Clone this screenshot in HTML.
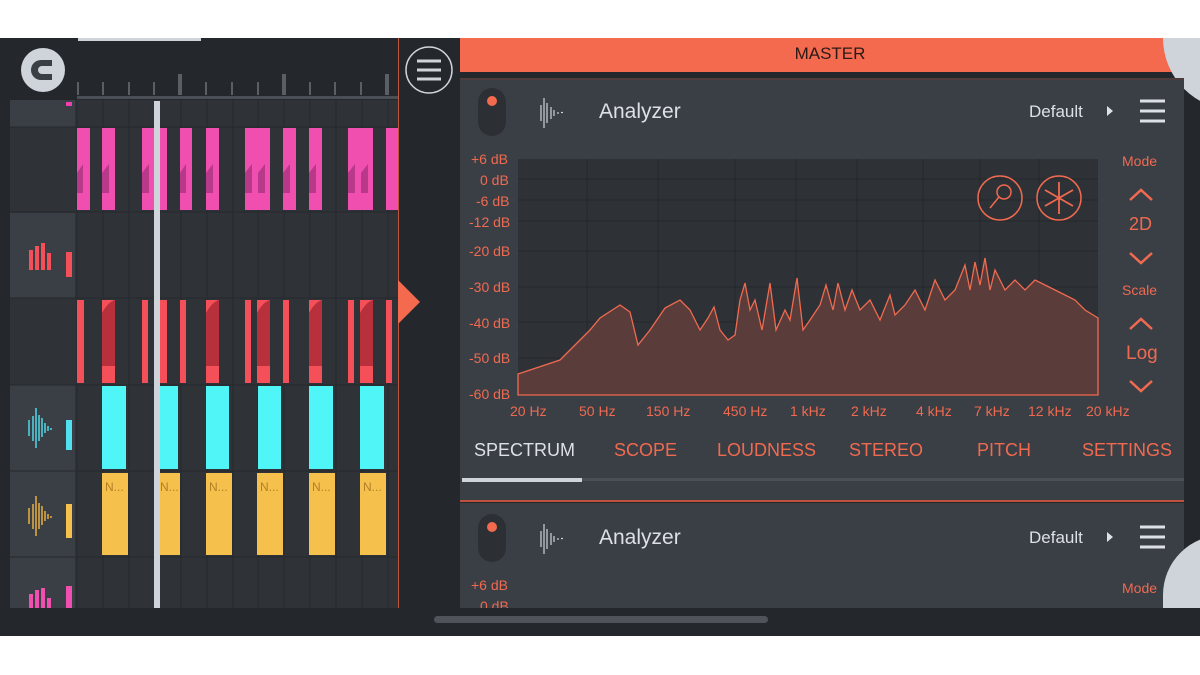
<!DOCTYPE html><html><head><meta charset="utf-8"><style>
*{margin:0;padding:0;box-sizing:border-box}
body{width:1200px;height:675px;background:#fff;position:relative;overflow:hidden;font-family:"Liberation Sans",sans-serif}
.a{position:absolute}
.lab{position:absolute;color:#f06a50;font-size:14px}
</style></head><body>
<div class="a" style="left:0;top:38px;width:1200px;height:598px;background:#24272b"></div>
<div class="a" style="left:78px;top:38px;width:123px;height:3px;background:#cfd3da"></div>
<div class="a" style="left:10px;top:100px;width:388px;height:508px;background:#2f3338"></div>
<div class="a" style="left:10px;top:100px;width:65px;height:508px;background:#3a3e45"></div>
<div class="a" style="left:10px;top:127px;width:65px;height:86px;background:#2f3338"></div>
<div class="a" style="left:10px;top:298px;width:65px;height:87px;background:#2f3338"></div>
<svg class="a" style="left:0;top:38px" width="460" height="598">
<g stroke="#26292d" stroke-width="1">
<line x1="10" y1="89" x2="398" y2="89"/><line x1="10" y1="174" x2="398" y2="174"/><line x1="10" y1="260" x2="398" y2="260"/><line x1="10" y1="347" x2="398" y2="347"/><line x1="10" y1="433" x2="398" y2="433"/><line x1="10" y1="519" x2="398" y2="519"/>
<line x1="77" y1="62" x2="77" y2="570"/><line x1="103" y1="62" x2="103" y2="570"/><line x1="129" y1="62" x2="129" y2="570"/><line x1="181" y1="62" x2="181" y2="570"/><line x1="207" y1="62" x2="207" y2="570"/><line x1="233" y1="62" x2="233" y2="570"/><line x1="258" y1="62" x2="258" y2="570"/><line x1="284" y1="62" x2="284" y2="570"/><line x1="310" y1="62" x2="310" y2="570"/><line x1="336" y1="62" x2="336" y2="570"/><line x1="362" y1="62" x2="362" y2="570"/><line x1="388" y1="62" x2="388" y2="570"/>
</g>
<rect x="77" y="58" width="321" height="3" fill="#4a4e55"/>
<g fill="#5a5e65"><rect x="77" y="44" width="2" height="13"/><rect x="102" y="44" width="2" height="13"/><rect x="128" y="44" width="2" height="13"/><rect x="153" y="44" width="2" height="13"/><rect x="178" y="36" width="4" height="21"/><rect x="205" y="44" width="2" height="13"/><rect x="231" y="44" width="2" height="13"/><rect x="257" y="44" width="2" height="13"/><rect x="282" y="36" width="4" height="21"/><rect x="309" y="44" width="2" height="13"/><rect x="334" y="44" width="2" height="13"/><rect x="360" y="44" width="2" height="13"/><rect x="385" y="36" width="4" height="21"/></g>
<circle cx="43" cy="32" r="22" fill="#cfd3da"/>
<path d="M52 22 H41 A10 10 0 0 0 41 42 H52 V36 H42 A4 4 0 0 1 42 28 H52 Z" fill="#3a3e45"/>
<rect x="48" y="28" width="3" height="8" fill="#cfd3da"/>
<rect x="66" y="64" width="6" height="4" fill="#f040b0"/>
<line x1="398.5" y1="0" x2="398.5" y2="570" stroke="#c0553e"/>
<circle cx="429" cy="32" r="23" fill="none" stroke="#cfd3da" stroke-width="1.5"/>
<g stroke="#cfd3da" stroke-width="3"><line x1="417" y1="23" x2="441" y2="23"/><line x1="417" y1="32" x2="441" y2="32"/><line x1="417" y1="41" x2="441" y2="41"/></g>
<path d="M398 242 L420 264 L398 286Z" fill="#f46a4e"/>
<g fill="#f04fb0"><rect x="77" y="90" width="13" height="82"/><rect x="102" y="90" width="13" height="82"/><rect x="142" y="90" width="25" height="82"/><rect x="180" y="90" width="12" height="82"/><rect x="206" y="90" width="13" height="82"/><rect x="245" y="90" width="25" height="82"/><rect x="283" y="90" width="13" height="82"/><rect x="309" y="90" width="13" height="82"/><rect x="348" y="90" width="25" height="82"/><rect x="386" y="90" width="12" height="82"/></g>
<g fill="#b8388a"><path d="M77 155 V135 L83 126 V155Z"/><path d="M102 155 V135 L109 126 V155Z"/><path d="M142 155 V135 L149 126 V155Z"/><path d="M180 155 V135 L186 126 V155Z"/><path d="M206 155 V135 L213 126 V155Z"/><path d="M245 155 V135 L252 126 V155Z"/><path d="M258 155 V135 L265 126 V155Z"/><path d="M283 155 V135 L290 126 V155Z"/><path d="M309 155 V135 L316 126 V155Z"/><path d="M348 155 V135 L355 126 V155Z"/><path d="M361 155 V135 L368 126 V155Z"/></g>
<g fill="#f5505a"><rect x="77" y="262" width="7" height="83"/><rect x="102" y="262" width="13" height="83"/><rect x="142" y="262" width="6" height="83"/><rect x="158" y="262" width="9" height="83"/><rect x="180" y="262" width="6" height="83"/><rect x="206" y="262" width="13" height="83"/><rect x="245" y="262" width="6" height="83"/><rect x="257" y="262" width="13" height="83"/><rect x="283" y="262" width="6" height="83"/><rect x="309" y="262" width="13" height="83"/><rect x="348" y="262" width="6" height="83"/><rect x="360" y="262" width="13" height="83"/><rect x="386" y="262" width="6" height="83"/></g>
<g fill="#b8303c"><path d="M102 328 V275 Q108 264 115 262 V328Z"/><path d="M206 328 V275 Q212 264 219 262 V328Z"/><path d="M257 328 V275 Q263 264 270 262 V328Z"/><path d="M309 328 V275 Q315 264 322 262 V328Z"/><path d="M360 328 V275 Q366 264 373 262 V328Z"/></g>
<g fill="#50f5f8"><rect x="102" y="348" width="24" height="83"/><rect x="158" y="348" width="20" height="83"/><rect x="206" y="348" width="23" height="83"/><rect x="258" y="348" width="23" height="83"/><rect x="309" y="348" width="24" height="83"/><rect x="360" y="348" width="24" height="83"/></g>
<g fill="#f6c04c"><rect x="102" y="435" width="26" height="82"/><rect x="158" y="435" width="22" height="82"/><rect x="206" y="435" width="26" height="82"/><rect x="257" y="435" width="26" height="82"/><rect x="309" y="435" width="26" height="82"/><rect x="360" y="435" width="26" height="82"/></g>
<g fill="#b08028" font-size="12"><text x="105" y="453">N...</text><text x="160" y="453">N...</text><text x="209" y="453">N...</text><text x="260" y="453">N...</text><text x="312" y="453">N...</text><text x="363" y="453">N...</text></g>
<g fill="#f5505a"><rect x="29" y="212" width="4" height="20"/><rect x="35" y="208" width="4" height="24"/><rect x="41" y="205" width="4" height="27"/><rect x="47" y="215" width="4" height="17"/><rect x="66" y="214" width="6" height="25"/></g>
<g fill="#f04fb0"><rect x="29" y="556" width="4" height="14"/><rect x="35" y="552" width="4" height="18"/><rect x="41" y="550" width="4" height="20"/><rect x="47" y="560" width="4" height="10"/><rect x="66" y="548" width="6" height="22"/></g>
<rect x="66" y="382" width="6" height="30" fill="#50e0f0"/><rect x="66" y="466" width="6" height="34" fill="#f6c04c"/>
<g stroke="#50d8e8" stroke-width="1.5"><line x1="29" y1="382" x2="29" y2="398"/><line x1="33" y1="378" x2="33" y2="403"/><line x1="36" y1="370" x2="36" y2="410"/><line x1="39" y1="377" x2="39" y2="403"/><line x1="42" y1="380" x2="42" y2="399"/><line x1="45" y1="385" x2="45" y2="395"/><line x1="48" y1="388" x2="48" y2="393"/><line x1="51" y1="390" x2="51" y2="392"/></g>
<g stroke="#e8b040" stroke-width="1.5"><line x1="29" y1="470" x2="29" y2="486"/><line x1="33" y1="466" x2="33" y2="491"/><line x1="36" y1="458" x2="36" y2="498"/><line x1="39" y1="465" x2="39" y2="491"/><line x1="42" y1="468" x2="42" y2="487"/><line x1="45" y1="473" x2="45" y2="483"/><line x1="48" y1="476" x2="48" y2="481"/><line x1="51" y1="478" x2="51" y2="480"/></g>
<rect x="154" y="63" width="6" height="507" fill="#cfd3da"/>
</svg>
<div class="a" style="left:460px;top:38px;width:740px;height:34px;background:#f46a4e;text-align:center;font-size:17px;line-height:32px;color:#2a1a16">MASTER</div>
<div class="a" style="left:1163px;top:38px;width:100px;height:72px;border-radius:0 0 0 80px;background:#cfd3da"></div>
<div class="a" style="left:460px;top:78px;width:724px;height:424px;background:#3a3e45;border-top:2px solid #4e3c3c"></div>
<div class="a" style="left:460px;top:500px;width:724px;height:2px;background:#c0503e"></div>
<div class="a" style="left:460px;top:503px;width:724px;height:105px;background:#3a3e45"></div>
<div class="a" style="left:1163px;top:535px;width:60px;height:75px;border-radius:60px 0 0 0;background:#cfd3da"></div>
<svg class="a" style="left:460px;top:78px" width="740" height="540">
<g id="hdr">
<rect x="18" y="10" width="28" height="48" rx="14" fill="#2c2f34"/><circle cx="32" cy="23" r="5" fill="#f46a4e"/>
<g stroke="#cfd3da" stroke-width="1.2"><line x1="84" y1="20" x2="84" y2="50"/><line x1="87" y1="25" x2="87" y2="45"/><line x1="81" y1="27" x2="81" y2="43"/><line x1="91" y1="29" x2="91" y2="41"/><line x1="94" y1="32" x2="94" y2="38"/><line x1="98" y1="34" x2="98" y2="36"/><line x1="101" y1="34.5" x2="103" y2="34.5"/></g>
<text x="139" y="40" fill="#dde0e5" font-size="21">Analyzer</text>
<text x="569" y="39" fill="#dde0e5" font-size="17">Default</text>
<path d="M647 28 L653 33 L647 38Z" fill="#dde0e5"/>
<g stroke="#dde0e5" stroke-width="3"><line x1="680" y1="23" x2="705" y2="23"/><line x1="680" y1="33" x2="705" y2="33"/><line x1="680" y1="43" x2="705" y2="43"/></g>
</g>
<use href="#hdr" y="426"/>
<rect x="58" y="81" width="580" height="236" fill="#2e3136"/>
<g stroke="#24272a"><line x1="58" y1="101" x2="638" y2="101"/><line x1="58" y1="122" x2="638" y2="122"/><line x1="58" y1="143" x2="638" y2="143"/><line x1="58" y1="173" x2="638" y2="173"/><line x1="58" y1="209" x2="638" y2="209"/><line x1="58" y1="244" x2="638" y2="244"/><line x1="58" y1="280" x2="638" y2="280"/>
<line x1="127" y1="81" x2="127" y2="317"/><line x1="198" y1="81" x2="198" y2="317"/><line x1="275" y1="81" x2="275" y2="317"/><line x1="336" y1="81" x2="336" y2="317"/><line x1="397" y1="81" x2="397" y2="317"/><line x1="463" y1="81" x2="463" y2="317"/><line x1="520" y1="81" x2="520" y2="317"/><line x1="579" y1="81" x2="579" y2="317"/></g>
<path d="M58 296 L100 282 L130 252 L140 240 L160 227 L170 234 L178 267 L190 252 L205 230 L220 222 L230 232 L240 252 L248 240 L254 229 L260 252 L268 262 L275 257 L280 222 L285 205 L290 232 L295 222 L302 252 L310 205 L316 252 L325 232 L330 242 L337 200 L343 252 L350 242 L360 227 L366 207 L373 232 L378 205 L385 232 L392 212 L400 232 L410 222 L420 242 L430 217 L435 237 L445 227 L455 212 L465 232 L475 202 L485 222 L495 212 L505 187 L510 212 L515 184 L520 207 L525 180 L530 212 L535 192 L545 212 L555 202 L565 212 L575 202 L585 207 L595 212 L605 217 L615 222 L625 232 L638 240 L638 317 L58 317Z" fill="#5a3d3a" stroke="#f06a50" stroke-width="1.3"/>
<circle cx="540" cy="120" r="22" fill="none" stroke="#f06a50" stroke-width="1.5"/>
<circle cx="544" cy="114" r="7" fill="none" stroke="#f06a50" stroke-width="1.5"/><line x1="539" y1="119" x2="530" y2="130" stroke="#f06a50" stroke-width="1.5"/>
<circle cx="599" cy="120" r="22" fill="none" stroke="#f06a50" stroke-width="1.5"/>
<g stroke="#f06a50" stroke-width="1.8"><line x1="599" y1="104" x2="599" y2="136"/><line x1="585" y1="112" x2="613" y2="128"/><line x1="585" y1="128" x2="613" y2="112"/></g>
<g fill="none" stroke="#f06a50" stroke-width="2.5"><path d="M670 122 L681 112 L692 122"/><path d="M670 175 L681 185 L692 175"/><path d="M670 251 L681 241 L692 251"/><path d="M670 303 L681 313 L692 303"/></g>
<rect x="2" y="400" width="120" height="4" fill="#cfd3da"/><rect x="122" y="400" width="602" height="3" fill="#4a4e55"/>
</svg>
<div class="lab" style="left:471px;top:151px">+6 dB</div>
<div class="lab" style="left:480px;top:172px">0 dB</div>
<div class="lab" style="left:476px;top:193px">-6 dB</div>
<div class="lab" style="left:469px;top:214px">-12 dB</div>
<div class="lab" style="left:469px;top:243px">-20 dB</div>
<div class="lab" style="left:469px;top:279px">-30 dB</div>
<div class="lab" style="left:469px;top:315px">-40 dB</div>
<div class="lab" style="left:469px;top:350px">-50 dB</div>
<div class="lab" style="left:469px;top:386px">-60 dB</div>
<div class="lab" style="left:471px;top:577px">+6 dB</div>
<div class="lab" style="left:480px;top:598px">0 dB</div>
<div class="lab" style="left:1122px;top:153px">Mode</div>
<div class="lab" style="left:1122px;top:580px">Mode</div>
<div class="lab" style="left:1122px;top:282px">Scale</div>
<div class="lab" style="left:1129px;top:214px;font-size:18px">2D</div>
<div class="lab" style="left:1126px;top:343px;font-size:19px">Log</div>
<div class="lab" style="left:510px;top:403px">20 Hz</div>
<div class="lab" style="left:579px;top:403px">50 Hz</div>
<div class="lab" style="left:646px;top:403px">150 Hz</div>
<div class="lab" style="left:723px;top:403px">450 Hz</div>
<div class="lab" style="left:790px;top:403px">1 kHz</div>
<div class="lab" style="left:851px;top:403px">2 kHz</div>
<div class="lab" style="left:916px;top:403px">4 kHz</div>
<div class="lab" style="left:974px;top:403px">7 kHz</div>
<div class="lab" style="left:1028px;top:403px">12 kHz</div>
<div class="lab" style="left:1086px;top:403px">20 kHz</div>
<div class="lab" style="left:474px;top:440px;font-size:18px;color:#dde0e5">SPECTRUM</div>
<div class="lab" style="left:614px;top:440px;font-size:18px">SCOPE</div>
<div class="lab" style="left:717px;top:440px;font-size:18px">LOUDNESS</div>
<div class="lab" style="left:849px;top:440px;font-size:18px">STEREO</div>
<div class="lab" style="left:977px;top:440px;font-size:18px">PITCH</div>
<div class="lab" style="left:1082px;top:440px;font-size:18px">SETTINGS</div>
<div class="a" style="left:0;top:608px;width:1200px;height:28px;background:#24272b"></div>
<div class="a" style="left:434px;top:616px;width:334px;height:7px;border-radius:4px;background:#50545a"></div>
</body></html>
